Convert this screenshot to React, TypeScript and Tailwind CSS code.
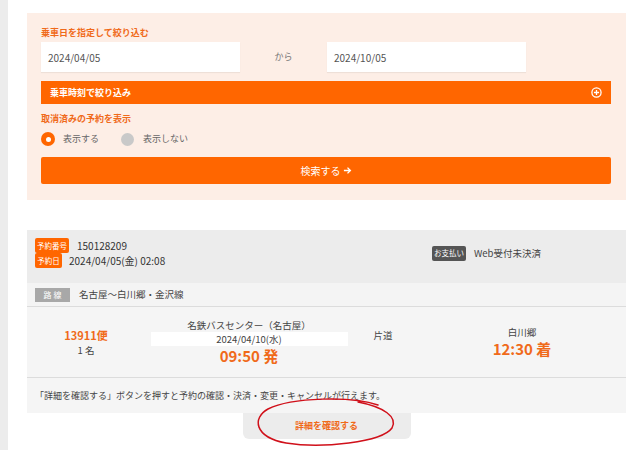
import React from "react";

const F = { fontFamily: '"Noto Sans CJK JP", "Noto Sans", sans-serif' };

export default function App() {
  return (
    <div className="relative w-[640px] h-[450px] overflow-hidden bg-white flex" style={F}>
      <div className="w-[8px] bg-[#ececec] shrink-0" />
      <div className="flex-1 pl-[19px] pr-[14px]">
        {/* search panel */}
        <div className="mt-[13px] bg-[#fdeee6] pl-[14px] pr-[15px] pt-[14px] pb-[16px]">
          <div className="text-[9px] leading-[12px] font-bold text-[#f06a1a]">乗車日を指定して絞り込む</div>
          <div className="mt-[3px] flex items-center">
            <div className="w-[199px] h-[30px] bg-white pl-[7px] flex items-center text-[10px] text-[#555] shadow-[0_1px_1px_rgba(0,0,0,0.06)]">2024/04/05</div>
            <span className="w-[87px] text-center text-[9px] text-[#777]">から</span>
            <div className="w-[199px] h-[30px] bg-white pl-[7px] flex items-center text-[10px] text-[#555] shadow-[0_1px_1px_rgba(0,0,0,0.06)]">2024/10/05</div>
          </div>
          <div className="mt-[9px] h-[23px] bg-[#ff6600] flex items-center justify-between pl-[9px] pr-[9px]">
            <span className="text-[9px] font-bold text-white leading-none">乗車時刻で絞り込み</span>
            <svg width="11" height="11" viewBox="0 0 12 12">
              <circle cx="6" cy="6" r="5" fill="none" stroke="white" strokeWidth="1.4" />
              <path d="M6 3.2v5.6M3.2 6h5.6" stroke="white" strokeWidth="1.4" />
            </svg>
          </div>
          <div className="mt-[9px] text-[9px] leading-[12px] font-bold text-[#f06a1a]">取消済みの予約を表示</div>
          <div className="mt-[7px] h-[14px] flex items-center">
            <span className="w-[14px] h-[14px] rounded-full bg-[#ff6600] flex items-center justify-center">
              <span className="w-[5px] h-[5px] rounded-full bg-white" />
            </span>
            <span className="ml-[8px] text-[9px] text-[#666]">表示する</span>
            <span className="ml-[22px] w-[13px] h-[13px] rounded-full bg-[#c9c9c9]" />
            <span className="ml-[9px] text-[9px] text-[#666]">表示しない</span>
          </div>
          <div className="mt-[11px] h-[27px] bg-[#ff6600] rounded-[2px] flex items-center justify-center text-white text-[10px]">
            <span>検索する</span>
            <svg width="9" height="9" viewBox="0 0 10 10" className="ml-[2px]">
              <path d="M1 5h7M5 1.8L8.2 5 5 8.2" fill="none" stroke="white" strokeWidth="1.5" />
            </svg>
          </div>
        </div>

        {/* reservation card */}
        <div className="mt-[30px]">
          <div className="bg-[#ececec] pl-[8px] pt-[8px] pb-[15px] flex items-center">
            <div className="flex-1 flex flex-col">
              <div className="flex items-center h-[15px]">
                <span className="w-[34px] h-[15px] bg-[#ff6600] rounded-[2px] text-white text-[7.5px] flex items-center justify-center">予約番号</span>
                <span className="ml-[8px] text-[10px] text-[#333]">150128209</span>
              </div>
              <div className="flex items-center h-[15px]">
                <span className="w-[27px] h-[15px] bg-[#ff6600] rounded-[2px] text-white text-[7.5px] flex items-center justify-center">予約日</span>
                <span className="ml-[7px] text-[10px] text-[#333]">2024/04/05(金) 02:08</span>
              </div>
            </div>
            <div className="w-[194px] flex items-center">
              <span className="w-[34px] h-[15px] bg-[#555] rounded-[2px] text-white text-[7.5px] flex items-center justify-center">お支払い</span>
              <span className="ml-[8px] text-[9.5px] text-[#444]">Web受付未決済</span>
            </div>
          </div>
          <div className="h-[24px] bg-[#f4f4f4] border-b border-[#dcdcdc] pl-[8px] flex items-center">
            <span className="w-[35px] h-[14px] bg-[#a8a8a8] text-white text-[8px] flex items-center justify-center">路 線</span>
            <span className="ml-[9px] text-[9.5px] text-[#444]">名古屋〜白川郷・金沢線</span>
          </div>
          <div className="h-[71px] bg-[#f5f5f5] border-b border-[#dcdcdc] flex items-center">
            <div className="w-[118px] flex flex-col items-center">
              <span className="text-[11px] leading-[14px] font-bold text-[#f06a1a]">13911便</span>
              <span className="mt-[2px] text-[9.5px] leading-[12px] text-[#444]">1 名</span>
            </div>
            <div className="w-[208px] flex flex-col items-center">
              <span className="text-[9.5px] leading-[12px] text-[#444]">名鉄バスセンター（名古屋）</span>
              <span className="mt-[1px] w-[197px] h-[14px] bg-white text-[9.5px] text-[#444] flex items-center justify-center">2024/04/10(水)</span>
              <span className="text-[15px] leading-[19px] font-bold text-[#f06a1a]">09:50 発</span>
            </div>
            <div className="w-[60px] flex justify-center pb-[14px]">
              <span className="text-[9.5px] text-[#444]">片道</span>
            </div>
            <div className="ml-[14px] w-[190px] flex flex-col items-center">
              <span className="text-[9.5px] leading-[12px] text-[#444]">白川郷</span>
              <span className="mt-[1px] text-[15px] leading-[19px] font-bold text-[#f06a1a]">12:30 着</span>
            </div>
          </div>
          <div className="h-[35px] bg-[#f5f5f5] pl-[8px] flex items-center text-[9px] text-[#444]">
            「詳細を確認する」ボタンを押すと予約の確認・決済・変更・キャンセルが行えます。
          </div>
          <div className="flex justify-center">
            <div className="w-[168px] h-[26px] bg-[#ececec] rounded-b-[6px] flex items-center justify-center text-[9px] font-bold text-[#f06a1a]">
              詳細を確認する
            </div>
          </div>
        </div>
      </div>
      <svg className="absolute left-0 top-0 pointer-events-none" width="640" height="450" viewBox="0 0 640 450">
        <path
          d="M378 405 C352 396 292 397 268 409 C252 418 254 437 286 443 C322 449 382 442 392 428 C398 417 384 407 358 402"
          fill="none"
          stroke="#d0101a"
          strokeWidth="1.5"
          strokeLinecap="round"
        />
      </svg>
    </div>
  );
}
